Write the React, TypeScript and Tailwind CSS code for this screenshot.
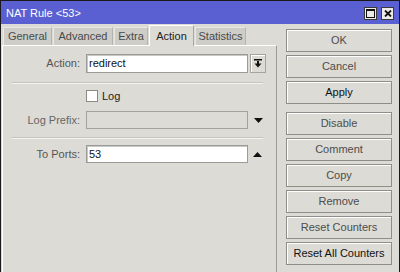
import React from "react";

const tabs = [
  { name: "General", w: "w-[49px]" },
  { name: "Advanced", w: "w-[60px]" },
  { name: "Extra", w: "w-[34px]" },
  { name: "Action", w: "w-[45px]", active: true },
  { name: "Statistics", w: "w-[51px]" },
];

function Btn({ label, dark }: { label: string; dark?: boolean }) {
  return (
    <div
      className={`h-[23px] w-[106px] flex items-center justify-center border border-[#8e8d88] bg-[#dcdbd5] shadow-[inset_1px_1px_0_#ffffff] text-[11px] ${
        dark ? "text-[#111111]" : "text-[#4d4d4d]"
      }`}
    >
      {label}
    </div>
  );
}

function Separator() {
  return <div className="ml-[9px] w-[251px] h-[2px] border-t border-[#c4c3be] border-b border-b-[#f4f4f0]" />;
}

export default function App() {
  return (
    <div
      className="w-[400px] h-[272px] overflow-hidden bg-[#dcdbd5] border-l border-r border-t border-[#1a1a1a] flex flex-col"
      style={{ fontFamily: '"Liberation Sans", Arial, sans-serif' }}
    >
      {/* Title bar */}
      <div className="h-[23px] bg-[#5a5fd2] flex items-center justify-between pl-[5px] pr-[5px]">
        <span className="text-white text-[11px] mt-[1px]">NAT Rule &lt;53&gt;</span>
        <div className="flex gap-[4px] mt-[1px]">
          <div className="w-[13px] h-[13px] bg-[#ecebe8] border border-[#3a3a3a] flex items-center justify-center">
            <svg width="9" height="9" viewBox="0 0 9 9">
              <rect x="0.5" y="0.5" width="8" height="8" fill="none" stroke="#111" />
              <rect x="0" y="0" width="9" height="2" fill="#111" />
            </svg>
          </div>
          <div className="w-[13px] h-[13px] bg-[#ecebe8] border border-[#3a3a3a] flex items-center justify-center">
            <svg width="8" height="7" viewBox="0 0 8 7">
              <path d="M1 0.5 L7 6.5 M7 0.5 L1 6.5" stroke="#111" strokeWidth="1.8" />
            </svg>
          </div>
        </div>
      </div>

      <div className="flex flex-1">
        {/* Left: tabs + panel */}
        <div className="w-[275px] ml-[1px] flex flex-col">
          <div className="h-[21px] flex items-end gap-px pl-[1px] pt-[1px]">
            {tabs.map((t) =>
              t.active ? (
                <div
                  key={t.name}
                  className={`${t.w} h-[21px] -mb-px bg-[#dcdbd5] border-t border-l border-white border-r border-r-[#a9a8a3] flex items-center justify-center text-[11px] text-[#222222] relative z-10`}
                >
                  {t.name}
                </div>
              ) : (
                <div
                  key={t.name}
                  className={`${t.w} h-[18px] bg-[#cecdc8] border-t border-l border-[#e9e8e4] border-r border-r-[#b5b4af] flex items-center justify-center text-[11px] text-[#4a4a4a]`}
                >
                  {t.name}
                </div>
              )
            )}
          </div>

          <div className="flex-1 border-t border-l border-white border-r border-r-[#9d9c97] flex flex-col pt-[8px]">
            {/* Action */}
            <div className="flex items-center h-[19px]">
              <span className="w-[77px] text-right text-[11px] text-[#555555]">Action:</span>
              <div className="ml-[6px] w-[162px] h-[19px] bg-white border border-[#9a9a96] shadow-[inset_1px_1px_0_#c8c8c4] flex items-center pl-[2px] text-[11px] text-[#111111]">
                redirect
              </div>
              <div className="ml-[2px] w-[16px] h-[19px] border border-[#a5a49f] shadow-[inset_1px_1px_0_#ffffff] flex items-center justify-center">
                <svg width="8" height="9" viewBox="0 0 8 9">
                  <rect x="0" y="0" width="8" height="1.5" fill="#111" />
                  <rect x="3" y="2" width="2" height="3" fill="#111" />
                  <path d="M0.5 4.5 L7.5 4.5 L4 8.5 Z" fill="#111" />
                </svg>
              </div>
            </div>

            <div className="mt-[9px]">
              <Separator />
            </div>

            {/* Log checkbox */}
            <div className="flex items-center h-[12px] mt-[6px] pl-[83px]">
              <div className="w-[12px] h-[12px] bg-white border border-[#8a8a86]" />
              <span className="ml-[4px] text-[11px] text-[#222222]">Log</span>
            </div>

            {/* Log Prefix */}
            <div className="flex items-center h-[18px] mt-[9px]">
              <span className="w-[77px] text-right text-[11px] text-[#666666]">Log Prefix:</span>
              <div className="ml-[6px] w-[162px] h-[18px] bg-[#dcdbd5] border border-[#a3a29d]" />
              <svg className="ml-[6px]" width="9" height="5" viewBox="0 0 9 5">
                <path d="M0 0 L9 0 L4.5 5 Z" fill="#111" />
              </svg>
            </div>

            <div className="mt-[8px]">
              <Separator />
            </div>

            {/* To Ports */}
            <div className="flex items-center h-[18px] mt-[6px]">
              <span className="w-[77px] text-right text-[11px] text-[#555555]">To Ports:</span>
              <div className="ml-[6px] w-[162px] h-[18px] bg-white border border-[#9a9a96] shadow-[inset_1px_1px_0_#c8c8c4] flex items-center pl-[2px] text-[11px] text-[#111111]">
                53
              </div>
              <svg className="ml-[5px]" width="9" height="5" viewBox="0 0 9 5">
                <path d="M0 5 L9 5 L4.5 0 Z" fill="#111" />
              </svg>
            </div>
          </div>
        </div>

        {/* Right: buttons */}
        <div className="pl-[9px] pt-[5px] flex flex-col">
          <div className="flex flex-col gap-[3px]">
            <Btn label="OK" />
            <Btn label="Cancel" />
            <Btn label="Apply" dark />
          </div>
          <div className="flex flex-col gap-[3px] mt-[8px]">
            <Btn label="Disable" />
            <Btn label="Comment" />
            <Btn label="Copy" />
            <Btn label="Remove" />
            <Btn label="Reset Counters" />
            <Btn label="Reset All Counters" dark />
          </div>
        </div>
      </div>
    </div>
  );
}
